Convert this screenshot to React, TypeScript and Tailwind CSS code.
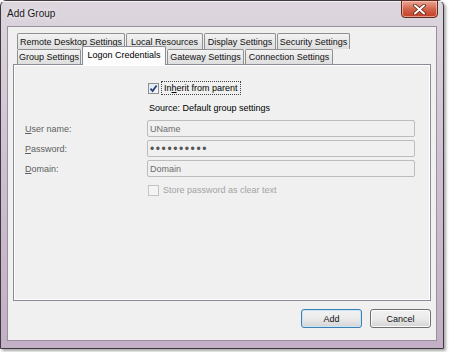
import React from 'react';

const rowOne = [
  { label: 'Remote Desktop Settings', w: 'w-[108px]' },
  { label: 'Local Resources', w: 'w-[77px]' },
  { label: 'Display Settings', w: 'w-[72px]' },
  { label: 'Security Settings', w: 'w-[73px]' },
];

const rowTwo = [
  { label: 'Group Settings', w: 'w-[64px]', active: false },
  { label: 'Logon Credentials', w: 'w-[84px]', active: true },
  { label: 'Gateway Settings', w: 'w-[77px]', active: false },
  { label: 'Connection Settings', w: 'w-[88px]', active: false },
];

function Tab({ label, w, active = false }: { label: string; w: string; active?: boolean }) {
  if (active) {
    return (
      <div
        className={`${w} relative top-[1px] z-10 h-[19px] flex items-start justify-center pt-[2px] border-t border-l border-r border-[#898c95] rounded-t-[2px] bg-[#fcfcfc] text-[#000]`}
      >
        {label}
      </div>
    );
  }
  return (
    <div
      className={`${w} h-full flex items-center justify-center border-t border-l border-r border-[#8e8f8f] rounded-t-[2px] bg-gradient-to-b from-[#f3f3f3] to-[#dedede] text-[#111]`}
    >
      {label}
    </div>
  );
}

function CheckBox({ checked, disabled = false }: { checked: boolean; disabled?: boolean }) {
  return (
    <div
      className={`w-[11px] h-[11px] border ${disabled ? 'border-[#c4c4c4] bg-[#f4f4f4]' : 'border-[#8e8f8f] bg-gradient-to-br from-[#dfe8f2] to-[#f7f9fb]'} flex items-center justify-center`}
    >
      {checked && (
        <svg width="9" height="9" viewBox="0 0 9 9">
          <path d="M1.5 4.6 L3.6 7 L7.6 1.4" fill="none" stroke="#2a3f7a" strokeWidth="1.8" />
        </svg>
      )}
    </div>
  );
}

function Field({ value, dots = false }: { value: string; dots?: boolean }) {
  return (
    <div className="h-[17px] border border-[#bcbcbc] rounded-[2px] bg-[#f0f0f0] flex items-center pl-[2px]">
      {dots ? (
        <span className="text-[12px] leading-none tracking-[1.6px] text-[#555]">{value}</span>
      ) : (
        <span className="text-[#6d6d6d]">{value}</span>
      )}
    </div>
  );
}

function Button({ label, primary = false }: { label: string; primary?: boolean }) {
  return (
    <div
      className={`w-[61px] h-[19px] rounded-[3px] border ${primary ? 'border-[#3c7fb1] shadow-[inset_0_0_0_1px_#c7e6f7]' : 'border-[#707070] shadow-[inset_0_0_0_1px_#fbfbfb]'} bg-gradient-to-b from-[#f2f2f2] via-[#ebebeb] to-[#d4d4d4] flex items-center justify-center text-[#111]`}
    >
      {label}
    </div>
  );
}

export default function App() {
  return (
    <div className="w-[449px] h-[352px] bg-white font-['Liberation_Sans',Arial,sans-serif] text-[9px] leading-[12px] text-[#111]">
      <div className="w-[444px] h-[349px] border border-[#3c3a3d] rounded-t-[6px] bg-gradient-to-b from-[#ddd6de] via-[#cdbfd0] to-[#c3afc6] shadow-[2px_2px_3px_rgba(0,0,0,0.35)] flex flex-col">
        {/* Title bar */}
        <div className="h-[25px] flex items-start justify-between shadow-[inset_0_1px_0_#f4f0f4]">
          <div className="pl-[6px] pt-[7px] text-[10px] leading-[12px] text-[#1a1a1a] [text-shadow:0_0_6px_#ffffff]">
            Add Group
          </div>
          <div className="mr-[5px] -mt-[1px] w-[37px] h-[18px] rounded-b-[4px] border border-[#5f2c24] bg-gradient-to-b from-[#e9a795] via-[#d2644d] to-[#c23c22] shadow-[inset_0_0_0_1px_rgba(255,210,200,0.6)] flex items-center justify-center">
            <svg width="13" height="11" viewBox="0 0 13 11">
              <path d="M2 1.5 L11 9.5 M11 1.5 L2 9.5" stroke="#5a2419" strokeWidth="3.6" strokeLinecap="round" />
              <path d="M2 1.5 L11 9.5 M11 1.5 L2 9.5" stroke="#ffffff" strokeWidth="2" strokeLinecap="round" />
            </svg>
          </div>
        </div>

        {/* Client area */}
        <div className="ml-[6px] w-[430px] h-[315px] border border-[#9a8f9c] bg-[#f0f0f0] flex flex-col">
          <div className="pl-[5px] pr-[5px] pt-[6px]">
            {/* Tab headers */}
            <div className="pl-[4px]">
              <div className="h-[16px] flex gap-[1px]">
                {rowOne.map((t) => (
                  <Tab key={t.label} label={t.label} w={t.w} />
                ))}
              </div>
              <div className="h-[15px] flex items-end gap-[1px]">
                {rowTwo.map((t) => (
                  <Tab key={t.label} label={t.label} w={t.w} active={t.active} />
                ))}
              </div>
            </div>

            {/* Tab panel */}
            <div className="h-[237px] border border-[#898c95] bg-[#f0f0f0] shadow-[inset_0_0_0_1px_#ffffff]">
              <div className="pl-[134px] pt-[16px]">
                <div className="h-[14px] flex items-center gap-[2px]">
                  <CheckBox checked />
                  <div className="h-[14px] px-[2px] border border-dotted border-[#444] flex items-center text-[#000]">
                    In<span className="underline">h</span>erit from parent
                  </div>
                </div>
                <div className="mt-[7px] pl-[1px] text-[#000]">Source: Default group settings</div>
              </div>

              <div className="mt-[6px] pl-[11px] grid grid-cols-[122px_268px] gap-y-[3px] items-center">
                <div className="text-[#5f5f5f]">
                  <span className="underline">U</span>ser name:
                </div>
                <Field value="UName" />
                <div className="text-[#5f5f5f]">
                  <span className="underline">P</span>assword:
                </div>
                <Field value="••••••••••" dots />
                <div className="text-[#5f5f5f]">
                  <span className="underline">D</span>omain:
                </div>
                <Field value="Domain" />
                <div />
                <div className="mt-[4px] pl-[1px] flex items-center gap-[4px] text-[#a3a3a3]">
                  <CheckBox checked={false} disabled />
                  Store password as clear text
                </div>
              </div>
            </div>
          </div>

          {/* Buttons */}
          <div className="mt-[8px] pr-[5px] flex justify-end gap-[8px]">
            <Button label="Add" primary />
            <Button label="Cancel" />
          </div>
        </div>
      </div>
    </div>
  );
}
